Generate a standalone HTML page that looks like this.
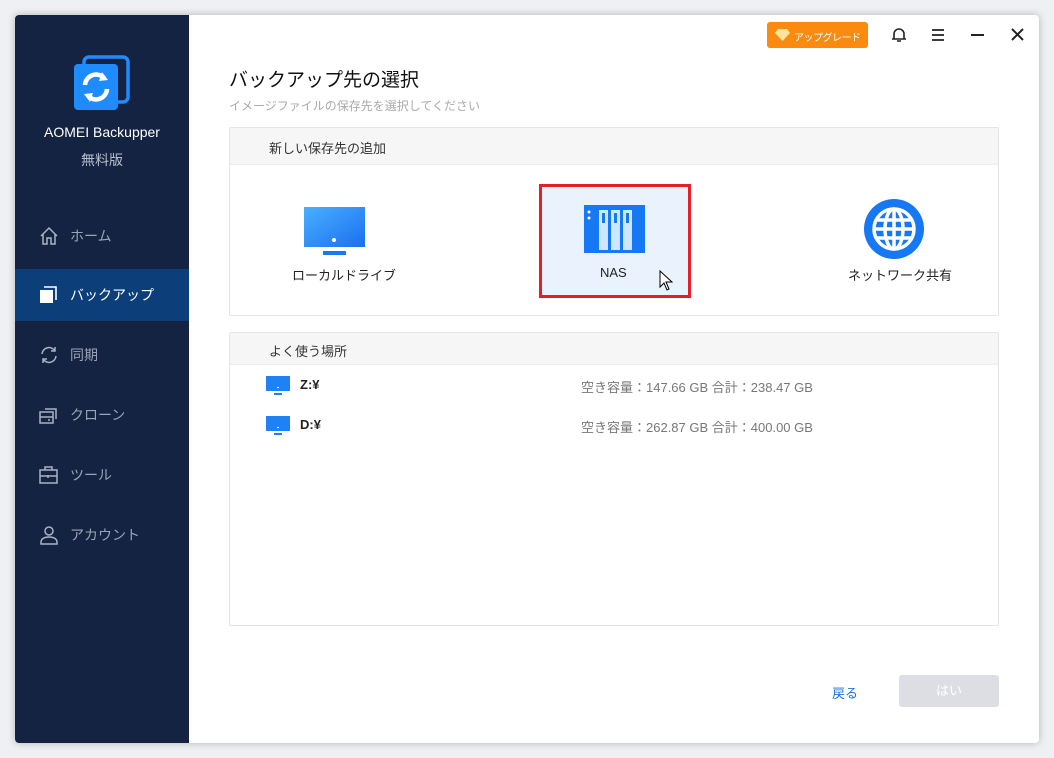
<!DOCTYPE html>
<html><head><meta charset="utf-8"><style>
*{margin:0;padding:0;box-sizing:border-box}
body{width:1054px;height:758px;background:#eef0f3;font-family:"Liberation Sans","Noto Sans CJK JP",sans-serif;position:relative;overflow:hidden}
.win{position:absolute;left:15px;top:15px;width:1024px;height:728px;background:#fff;box-shadow:0 0 8px rgba(0,0,0,.25);border-radius:4px;overflow:hidden}
.side{position:absolute;left:0;top:0;width:174px;height:728px;background:#142342}
.abs{position:absolute}
.nav{position:absolute;left:0;width:174px;height:52px;color:#9aa4b5;font-size:14px}
.nav span{position:absolute;left:55px;top:16px}
.nav svg{position:absolute;left:24px;top:16px}
.box{position:absolute;border:1px solid #e3e5e8;background:#fff;border-radius:2px}
.hd{background:#f6f6f7;height:37px;border-bottom:1px solid #ececee;font-size:13px;color:#333;padding:10px 0 0 39px}
.lbl{position:absolute;font-size:13px;color:#222;white-space:nowrap}
</style></head><body>
<div class="win">
<div class="side">
 <svg class="abs" style="left:57px;top:39px" width="60" height="60" viewBox="0 0 60 60">
  <rect x="12" y="3" width="44" height="45" rx="5" fill="none" stroke="#1e8cff" stroke-width="3.5"/>
  <rect x="2" y="10" width="44" height="46" rx="4" fill="#1e8cff"/>
  <path d="M13 31a11 11 0 0 1 19-7" stroke="#fff" stroke-width="4.5" fill="none"/><path d="M30 18l6 8-9 1z" fill="#fff"/>
  <path d="M35 35a11 11 0 0 1-19 7" stroke="#fff" stroke-width="4.5" fill="none"/><path d="M18 48l-6-8 9-1z" fill="#fff"/>
 </svg>
 <div class="abs" style="left:0;width:174px;top:109px;text-align:center;color:#fff;font-size:14px">AOMEI Backupper</div>
 <div class="abs" style="left:0;width:174px;top:135px;text-align:center;color:#b8bfcc;font-size:14px">無料版</div>
 <div class="nav" style="top:195px"><svg width="20" height="20" viewBox="0 0 20 20" fill="none" stroke="#aab3c3" stroke-width="1.5"><path d="M2 10L10 2l8 8M4 8v10h4v-6h4v6h4V8"/></svg><span>ホーム</span></div>
 <div class="nav" style="top:254px;background:#0c3f7a;color:#fff"><svg width="20" height="20" viewBox="0 0 20 20"><rect x="1" y="5" width="13" height="13" fill="#fff"/><path d="M5 2h12v13" stroke="#fff" stroke-width="1.6" fill="none"/></svg><span>バックアップ</span></div>
 <div class="nav" style="top:314px"><svg width="20" height="20" viewBox="0 0 20 20" fill="none" stroke="#aab3c3" stroke-width="1.5"><path d="M3 9a7 7 0 0 1 13-3M17 11a7 7 0 0 1-13 3M16 2v4h-4M4 18v-4h4"/></svg><span>同期</span></div>
 <div class="nav" style="top:374px"><svg width="20" height="20" viewBox="0 0 20 20" fill="none" stroke="#aab3c3" stroke-width="1.5"><rect x="1" y="7" width="13" height="11"/><path d="M1 12h13M6 4h11v10M9 15h2"/></svg><span>クローン</span></div>
 <div class="nav" style="top:434px"><svg width="20" height="20" viewBox="0 0 20 20" fill="none" stroke="#aab3c3" stroke-width="1.5"><rect x="1" y="5" width="17" height="13"/><path d="M6 5V2h7v3M1 11h17M9 10v3"/></svg><span>ツール</span></div>
 <div class="nav" style="top:494px"><svg width="20" height="20" viewBox="0 0 20 20" fill="none" stroke="#aab3c3" stroke-width="1.5"><circle cx="10" cy="6" r="4"/><path d="M2 19v-2c0-3 3-5 8-5s8 2 8 5v2z"/></svg><span>アカウント</span></div>
</div>
<div class="abs" style="left:752px;top:7px;width:101px;height:26px;background:#fa8a10;border-radius:3px;color:#fff;font-size:10px;letter-spacing:-0.5px;white-space:nowrap;padding:7px 0 0 27px">アップグレード
 <svg class="abs" style="left:8px;top:7px" width="15" height="12" viewBox="0 0 15 12"><path d="M3 0h9l3 4-7.5 8L0 4z" fill="#ffe39a"/></svg></div>
<svg class="abs" style="left:876px;top:12px" width="16" height="16" viewBox="0 0 16 16" fill="none" stroke="#222" stroke-width="1.6"><path d="M3 12V7a5 5 0 0 1 10 0v5M1 12h14M6 14h4"/></svg>
<svg class="abs" style="left:916px;top:13px" width="14" height="14" viewBox="0 0 14 14" stroke="#222" stroke-width="1.8"><path d="M1 2h12M1 7h12M1 12h12"/></svg>
<div class="abs" style="left:956px;top:19px;width:13px;height:2px;background:#222"></div>
<svg class="abs" style="left:996px;top:13px" width="13" height="13" viewBox="0 0 13 13" stroke="#222" stroke-width="2"><path d="M1 1l11 11M12 1L1 12"/></svg>

<div class="abs" style="left:214px;top:50px;font-size:19px;color:#111">バックアップ先の選択</div>
<div class="abs" style="left:214px;top:82px;font-size:12px;color:#aaa">イメージファイルの保存先を選択してください</div>

<div class="box" style="left:214px;top:112px;width:770px;height:189px">
 <div class="hd">新しい保存先の追加</div>
 <svg class="abs" style="left:74px;top:79px" width="61" height="49" viewBox="0 0 61 49"><defs><linearGradient id="g" x1="0" y1="0" x2="1" y2="1"><stop offset="0" stop-color="#4ab0ff"/><stop offset="1" stop-color="#1a6ff0"/></linearGradient></defs><rect x="0" y="0" width="61" height="40" fill="url(#g)"/><circle cx="30" cy="33" r="2" fill="#fff"/><rect x="19" y="44" width="23" height="4" fill="#1a78f0"/></svg>
 <div class="lbl" style="left:62px;top:137px">ローカルドライブ</div>
 <div class="abs" style="left:309px;top:56px;width:152px;height:114px;background:#eaf3fd;border:3px solid #e32028"></div>
 <svg class="abs" style="left:354px;top:77px" width="61" height="48" viewBox="0 0 61 48"><rect width="61" height="48" fill="#1678f2"/><circle cx="5" cy="7" r="1.5" fill="#fff"/><circle cx="5" cy="13" r="1.5" fill="#fff"/><rect x="15" y="5" width="9" height="40" fill="#cfe6ff"/><rect x="27" y="5" width="9" height="40" fill="#cfe6ff"/><rect x="39" y="5" width="9" height="40" fill="#cfe6ff"/><rect x="18" y="8" width="3" height="10" fill="#1678f2"/><rect x="30" y="8" width="3" height="10" fill="#1678f2"/><rect x="42" y="8" width="3" height="10" fill="#1678f2"/></svg>
 <div class="lbl" style="left:370px;top:137px">NAS</div>
 <svg class="abs" style="left:429px;top:142px" width="14" height="22" viewBox="0 0 14 22"><path d="M1 1v16l4-4 3 7 2-1-3-7h6z" fill="#fff" stroke="#000"/></svg>
 <svg class="abs" style="left:633px;top:70px" width="62" height="62" viewBox="0 0 62 62"><circle cx="31" cy="31" r="30" fill="#1678f2"/><g fill="none" stroke="#fff" stroke-width="3.5"><circle cx="31" cy="31" r="20"/><ellipse cx="31" cy="31" rx="9" ry="20"/><path d="M11 31h40M31 11v40M14 22h34M14 40h34"/></g></svg>
 <div class="lbl" style="left:618px;top:137px">ネットワーク共有</div>
</div>

<div class="box" style="left:214px;top:317px;width:770px;height:294px">
 <div class="hd" style="height:32px;padding-top:8px">よく使う場所</div>
 <svg class="abs" style="left:36px;top:43px" width="24" height="20" viewBox="0 0 24 20"><rect width="24" height="15" fill="#1e82f5"/><rect x="8" y="17" width="8" height="2" fill="#1e82f5"/><rect x="11" y="11" width="2" height="1" fill="#fff"/></svg>
 <div class="lbl" style="left:70px;top:44px;font-weight:bold">Z:¥</div>
 <div class="lbl" style="left:351px;top:44px;color:#777">空き容量：147.66 GB 合計：238.47 GB</div>
 <svg class="abs" style="left:36px;top:83px" width="24" height="20" viewBox="0 0 24 20"><rect width="24" height="15" fill="#1e82f5"/><rect x="8" y="17" width="8" height="2" fill="#1e82f5"/><rect x="11" y="11" width="2" height="1" fill="#fff"/></svg>
 <div class="lbl" style="left:70px;top:84px;font-weight:bold">D:¥</div>
 <div class="lbl" style="left:351px;top:84px;color:#777">空き容量：262.87 GB 合計：400.00 GB</div>
</div>

<div class="abs" style="left:817px;top:668px;font-size:13px;color:#1a70d8">戻る</div>
<div class="abs" style="left:884px;top:660px;width:100px;height:32px;background:#dcdee3;border-radius:3px;color:#fff;font-size:13px;text-align:center;line-height:32px">はい</div>
</div>
</body></html>
